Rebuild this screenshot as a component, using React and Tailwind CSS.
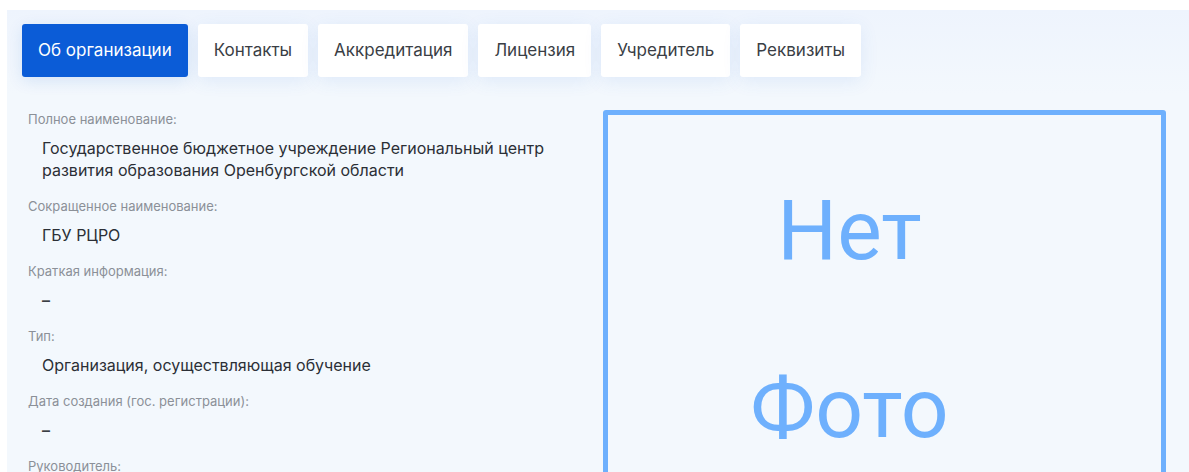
import React from "react";

const tabs = ["Об организации", "Контакты", "Аккредитация", "Лицензия", "Учредитель", "Реквизиты"];

const fields = [
  { label: "Полное наименование:", value: ["Государственное бюджетное учреждение Региональный центр", "развития образования Оренбургской области"] },
  { label: "Сокращенное наименование:", value: ["ГБУ РЦРО"] },
  { label: "Краткая информация:", value: ["–"], dash: true },
  { label: "Тип:", value: ["Организация, осуществляющая обучение"] },
  { label: "Дата создания (гос. регистрации):", value: ["–"], dash: true },
  { label: "Руководитель:", value: [] },
];

export default function App() {
  return (
    <div className="w-[1189px] h-[472px] overflow-hidden bg-white pt-[10px] pl-[7px]" style={{ fontFamily: "Inter, 'Noto Sans', sans-serif" }}>
      <div className="h-full bg-[#f3f8fd] rounded-tl-[4px]">
        <div className="flex gap-[10px] pl-[15px] pt-[14px] pb-[18px] bg-gradient-to-b from-[#eef4fd] to-[#f3f8fd]">
          {tabs.map((t, i) => (
            <div
              key={t}
              className={
                i === 0
                  ? "h-[53px] px-[16px] flex items-center rounded-[3px] bg-[#0b5cd7] text-white text-[17px] shadow-[0_4px_16px_rgba(20,90,200,0.12)]"
                  : "h-[53px] px-[16px] flex items-center rounded-[3px] bg-white text-[#3a3e45] text-[17px] shadow-[0_4px_18px_rgba(60,120,220,0.10)]"
              }
            >
              {t}
            </div>
          ))}
        </div>
        <div className="flex">
          <div className="w-[596px] pl-[21px] pt-[16px]">
            {fields.map((f) => (
              <div key={f.label} className="mb-[17px]">
                <div className="text-[13px] leading-[16px] text-[#8b9098]">{f.label}</div>
                {f.value.length > 0 && (
                  <div className="pl-[14px] mt-[10px] text-[16px] leading-[22px] text-[#2b2f36]">
                    {f.value.map((v) => (
                      <div key={v} className={f.dash ? "font-semibold text-[#3a3e45]" : ""}>{v}</div>
                    ))}
                  </div>
                )}
              </div>
            ))}
          </div>
          <div className="pt-[15px]">
            <div
              className="w-[563px] h-[563px] border-[5px] border-[#6eb0fd] rounded-[3px] pr-[70px] flex flex-col items-center text-[#6eb0fd]"
              style={{ fontFamily: "Roboto, sans-serif" }}
            >
              <div className="text-[84px] leading-[84px] mt-[74px]">Нет</div>
              <div className="text-[84px] leading-[84px] mt-[94px]">Фото</div>
            </div>
          </div>
        </div>
      </div>
    </div>
  );
}
